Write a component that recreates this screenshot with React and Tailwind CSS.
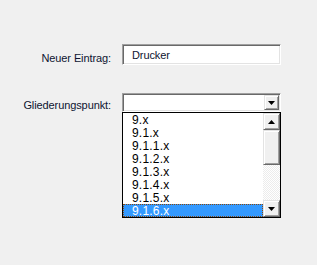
const sunken =
  'border border-t-[#a0a0a0] border-l-[#a0a0a0] border-r-white border-b-white shadow-[inset_1px_1px_0_#696969,inset_-1px_-1px_0_#e3e3e3]'
const raised =
  'border border-t-[#e3e3e3] border-l-[#e3e3e3] border-r-[#696969] border-b-[#696969] shadow-[inset_1px_1px_0_#ffffff,inset_-1px_-1px_0_#a0a0a0] bg-[#f0f0f0]'

const items = ['9.x', '9.1.x', '9.1.1.x', '9.1.2.x', '9.1.3.x', '9.1.4.x', '9.1.5.x', '9.1.6.x']

function Arrow({ up }) {
  return (
    <svg width="7" height="4" viewBox="0 0 7 4">
      <polygon points={up ? '3.5,0 7,4 0,4' : '0,0 7,0 3.5,4'} fill="#000" />
    </svg>
  )
}

function ScrollButton({ up }) {
  return (
    <div className={`h-[17px] w-full flex items-center justify-center ${raised}`}>
      <Arrow up={up} />
    </div>
  )
}

export default function App() {
  const selected = 7
  return (
    <div className="w-[317px] h-[265px] bg-[#f0f0f0] pt-[44px] font-['Liberation_Sans',Arial,sans-serif] text-[11px] tracking-[-0.1px]">
      <div className="flex items-end">
        <div className="w-[111px] text-right leading-[13px] text-[#0e1430]">Neuer Eintrag:</div>
        <div className={`ml-[11px] w-[159px] h-[21px] bg-white flex items-center pl-[9px] pt-[2px] text-[#0e1430] ${sunken}`}>
          Drucker
        </div>
      </div>

      <div className="flex items-end mt-[28px]">
        <div className="w-[111px] text-right leading-[13px] text-[#0e1430]">Gliederungspunkt:</div>
        <div className="ml-[11px] w-[159px] relative">
          <div className={`h-[19px] bg-white flex justify-end items-center pr-[1px] ${sunken}`}>
            <div className={`w-[15px] h-[15px] flex items-center justify-center ${raised}`}>
              <Arrow />
            </div>
          </div>

          {/* dropdown list */}
          <div className="absolute left-0 top-[19px] w-[159px] border border-black bg-white flex">
            <div className="w-[140px] flex flex-col">
              {items.map((it, i) => (
                <div
                  key={it}
                  className={`h-[13px] text-[12px] tracking-[0.2px] ${
                    i === selected
                      ? 'bg-[#3399ff] text-white border border-dotted border-[#8a4a10] pl-[8px] leading-[12px]'
                      : 'text-black pl-[9px] leading-[14px]'
                  }`}
                >
                  {it}
                </div>
              ))}
            </div>
            <div className="w-[17px] flex flex-col">
              <ScrollButton up />
              <div className={`h-[35px] ${raised}`} />
              <div className="flex-1 bg-[repeating-conic-gradient(#ffffff_0_25%,#ececec_0_50%)] bg-[length:2px_2px]" />
              <ScrollButton />
            </div>
          </div>
        </div>
      </div>
    </div>
  )
}
